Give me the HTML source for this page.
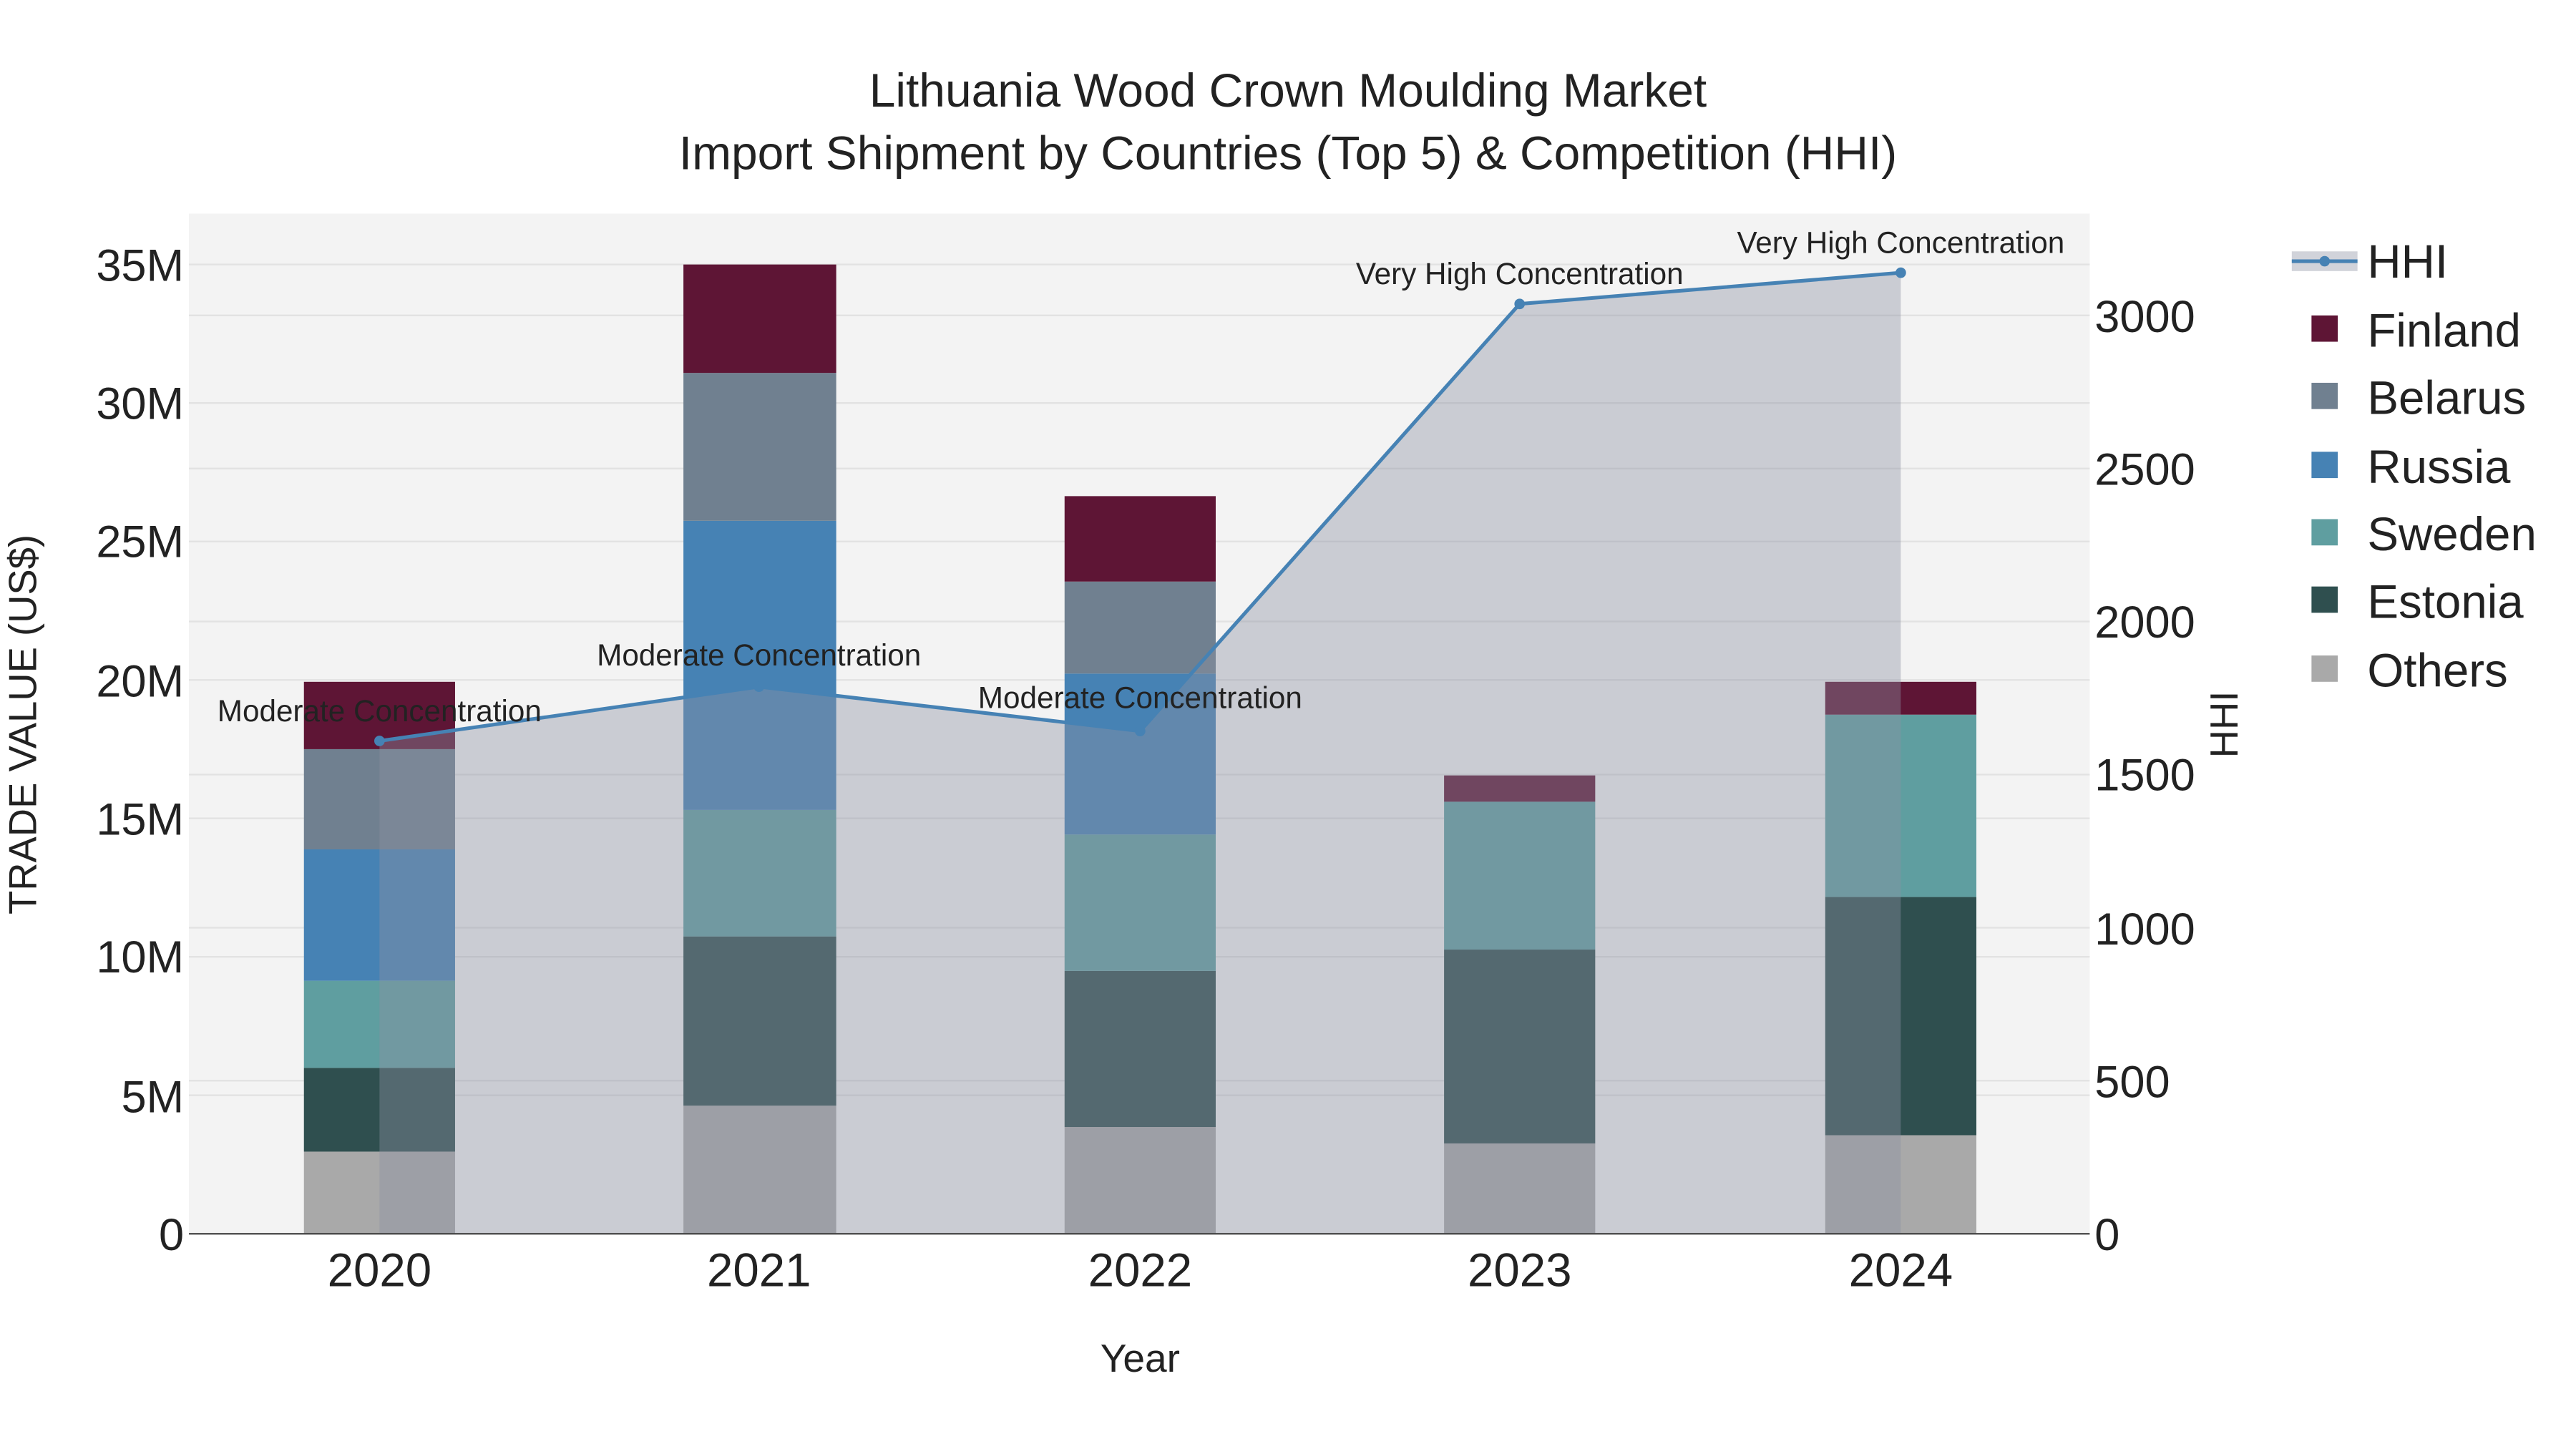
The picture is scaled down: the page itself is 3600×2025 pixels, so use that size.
<!DOCTYPE html>
<html><head><meta charset="utf-8"><style>
html,body{margin:0;padding:0;background:#fff}
svg{display:block}
text{font-family:"Liberation Sans",Arial,sans-serif;fill:#222}
</style></head><body>
<svg width="3600" height="2025" viewBox="0 0 1568 882" preserveAspectRatio="none" xmlns="http://www.w3.org/2000/svg">
<rect x="0" y="0" width="1568" height="882" fill="#fff"/>
<rect x="115" y="130" width="1157" height="621" fill="#f3f3f3"/>
<g stroke="#e2e2e2" stroke-width="1">
<line x1="115" x2="1272" y1="666.7" y2="666.7"/><line x1="115" x2="1272" y1="582.4" y2="582.4"/>
<line x1="115" x2="1272" y1="498.1" y2="498.1"/><line x1="115" x2="1272" y1="413.9" y2="413.9"/>
<line x1="115" x2="1272" y1="329.6" y2="329.6"/><line x1="115" x2="1272" y1="245.3" y2="245.3"/>
<line x1="115" x2="1272" y1="161" y2="161"/>
<line x1="115" x2="1272" y1="657.8" y2="657.8"/><line x1="115" x2="1272" y1="564.7" y2="564.7"/>
<line x1="115" x2="1272" y1="471.5" y2="471.5"/><line x1="115" x2="1272" y1="378.3" y2="378.3"/>
<line x1="115" x2="1272" y1="285.2" y2="285.2"/><line x1="115" x2="1272" y1="192" y2="192"/>
</g>
<g>
<rect x="185" y="701" width="92" height="50" fill="#a9a9a9"/>
<rect x="185" y="650" width="92" height="51" fill="#2f4f4f"/>
<rect x="185" y="597" width="92" height="53" fill="#5f9ea0"/>
<rect x="185" y="517" width="92" height="80" fill="#4682b4"/>
<rect x="185" y="456" width="92" height="61" fill="#708090"/>
<rect x="185" y="415" width="92" height="41" fill="#5e1535"/>
</g>
<g>
<rect x="416" y="673" width="93" height="78" fill="#a9a9a9"/>
<rect x="416" y="570" width="93" height="103" fill="#2f4f4f"/>
<rect x="416" y="493" width="93" height="77" fill="#5f9ea0"/>
<rect x="416" y="317" width="93" height="176" fill="#4682b4"/>
<rect x="416" y="227" width="93" height="90" fill="#708090"/>
<rect x="416" y="161" width="93" height="66" fill="#5e1535"/>
</g>
<g>
<rect x="648" y="686" width="92" height="65" fill="#a9a9a9"/>
<rect x="648" y="591" width="92" height="95" fill="#2f4f4f"/>
<rect x="648" y="508" width="92" height="83" fill="#5f9ea0"/>
<rect x="648" y="410" width="92" height="98" fill="#4682b4"/>
<rect x="648" y="354" width="92" height="56" fill="#708090"/>
<rect x="648" y="302" width="92" height="52" fill="#5e1535"/>
</g>
<g>
<rect x="879" y="696" width="92" height="55" fill="#a9a9a9"/>
<rect x="879" y="578" width="92" height="118" fill="#2f4f4f"/>
<rect x="879" y="488" width="92" height="90" fill="#5f9ea0"/>
<rect x="879" y="472" width="92" height="16" fill="#5e1535"/>
</g>
<g>
<rect x="1111" y="691" width="92" height="60" fill="#a9a9a9"/>
<rect x="1111" y="546" width="92" height="145" fill="#2f4f4f"/>
<rect x="1111" y="435" width="92" height="111" fill="#5f9ea0"/>
<rect x="1111" y="415" width="92" height="20" fill="#5e1535"/>
</g>
<polygon points="231,751 231,451 462,418 694,445 925,185 1157,166 1157,751" fill="rgb(140,146,162)" fill-opacity="0.4"/>
<polyline points="231,451 462,418 694,445 925,185 1157,166" fill="none" stroke="#4682b4" stroke-width="2.2"/>
<g fill="#4682b4"><circle cx="231" cy="451" r="3.2"/><circle cx="462" cy="418" r="3.2"/><circle cx="694" cy="445" r="3.2"/><circle cx="925" cy="185" r="3.2"/><circle cx="1157" cy="166" r="3.2"/></g>
<line x1="115" x2="1272" y1="751" y2="751" stroke="#444" stroke-width="1"/>
<g font-size="18.4" text-anchor="middle">
<text x="231" y="439">Moderate Concentration</text>
<text x="462" y="405">Moderate Concentration</text>
<text x="694" y="431">Moderate Concentration</text>
<text x="925" y="173">Very High Concentration</text>
<text x="1157" y="154">Very High Concentration</text>
</g>
<g font-size="27.5" text-anchor="end">
<text x="112" y="761">0</text><text x="112" y="677">5M</text><text x="112" y="592">10M</text>
<text x="112" y="508">15M</text><text x="112" y="424">20M</text><text x="112" y="339">25M</text>
<text x="112" y="255">30M</text><text x="112" y="171">35M</text>
</g>
<g font-size="27.5" text-anchor="start">
<text x="1275" y="761">0</text><text x="1275" y="668">500</text><text x="1275" y="575">1000</text>
<text x="1275" y="481">1500</text><text x="1275" y="388">2000</text><text x="1275" y="295">2500</text>
<text x="1275" y="202">3000</text>
</g>
<g font-size="28.5" text-anchor="middle">
<text x="231" y="783">2020</text><text x="462" y="783">2021</text><text x="694" y="783">2022</text>
<text x="925" y="783">2023</text><text x="1157" y="783">2024</text>
</g>
<text x="694" y="835" font-size="24" text-anchor="middle">Year</text>
<text transform="translate(22,441) rotate(-90)" font-size="23.7" text-anchor="middle">TRADE VALUE (US$)</text>
<text transform="translate(1362,441) rotate(-90)" font-size="23.7" text-anchor="middle">HHI</text>
<text x="784" y="65" font-size="28.7" text-anchor="middle">Lithuania Wood Crown Moulding Market</text>
<text x="784" y="103" font-size="28.7" text-anchor="middle">Import Shipment by Countries (Top 5) &amp; Competition (HHI)</text>
<rect x="1395" y="153" width="40" height="12" fill="rgb(140,146,162)" fill-opacity="0.4"/>
<line x1="1395" x2="1435" y1="159" y2="159" stroke="#4682b4" stroke-width="2.2"/>
<circle cx="1415" cy="159" r="3.2" fill="#4682b4"/>
<rect x="1407" y="192" width="16" height="16" fill="#5e1535"/>
<rect x="1407" y="233" width="16" height="16" fill="#708090"/>
<rect x="1407" y="275" width="16" height="16" fill="#4682b4"/>
<rect x="1407" y="316" width="16" height="16" fill="#5f9ea0"/>
<rect x="1407" y="357" width="16" height="16" fill="#2f4f4f"/>
<rect x="1407" y="399" width="16" height="16" fill="#a9a9a9"/>
<g font-size="28.5">
<text x="1441" y="169">HHI</text><text x="1441" y="211">Finland</text><text x="1441" y="252">Belarus</text>
<text x="1441" y="294">Russia</text><text x="1441" y="335">Sweden</text><text x="1441" y="376">Estonia</text>
<text x="1441" y="418">Others</text>
</g>
</svg>
</body></html>
